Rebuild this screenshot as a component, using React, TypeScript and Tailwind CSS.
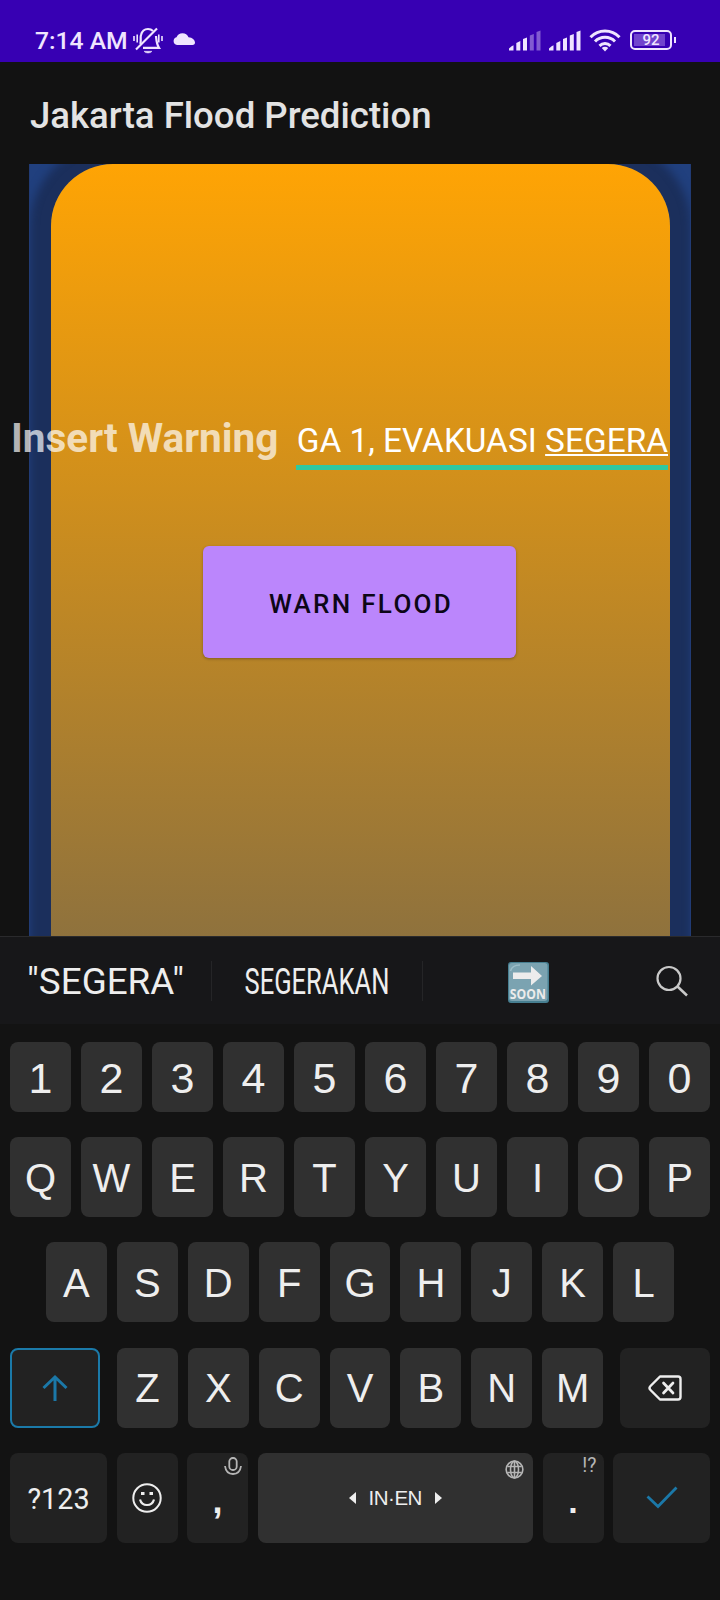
import type { ReactNode } from "react";

const roboto = "font-['Roboto',sans-serif]";
const sans = "font-['Liberation_Sans',sans-serif]";

function StatusBar() {
  return (
    <header className="flex h-[62px] items-start bg-[#3700b3] pl-[35px] text-[#efe4ff]">
      <div className={`${roboto} mt-[26px] w-[94px] whitespace-nowrap text-[24.700px] leading-[29px] font-medium`}>7:14 AM</div>
      <svg className="mt-[26px] ml-[3px]" width="32" height="30" viewBox="0 0 32 30" fill="none" stroke="currentColor" strokeWidth="2">
        <path d="M8.200 18C9.500 15 8 12 9 9C10 5 12.500 3 16 3C18 3 20 4 21 5M24 10C24.500 15 24.500 18 27 21.800H11" strokeWidth="2.200" />
        <path d="M4 23.500L25 2.500" strokeWidth="2.200" />
        <path d="M12 25.300H20Q19 27 16 27T12 25.300" fill="currentColor" strokeWidth=".5" />
        <path d="M2 10V15M5.200 8.500V16.500M26.800 8.500V16.500M30 10V15" strokeWidth="1.600" />
      </svg>
      <svg className="mt-[32px] ml-[9px]" width="23" height="14" viewBox="0 0 23 14" fill="currentColor">
        <path d="M4 13A4 4 0 0 1 3.500 5.200A6.500 6.500 0 0 1 15.500 5.200Q21.500 6 22 10.300Q22 13 19.500 13Z" />
      </svg>
      <div className="mt-[30px] ml-[313px] flex gap-[8px]">
        <Signal dim />
        <Signal />
      </div>
      <svg className="mt-[28px] ml-[8px]" width="32" height="24" viewBox="0 0 32 24" fill="none" stroke="currentColor" strokeWidth="3">
        <path d="M1.500 9.200A20 20 0 0 1 30.500 9.200M6 13.500A14 14 0 0 1 26 13.500M10.500 17.800A8 8 0 0 1 21.500 17.800" />
        <path d="M16 23.500L12.800 20A4.500 4.500 0 0 1 19.200 20Z" fill="currentColor" stroke="none" />
      </svg>
      <div className="mt-[30px] ml-[9px] flex items-center">
        <div className="flex h-[20px] w-[42px] rounded-[5px] border-2 border-[#efe4ff] p-[2px]">
          <div className={`${roboto} flex h-[12px] w-[31px] items-center justify-center bg-[#7143cd] pt-[1px] pl-[3px] text-[15px] leading-none font-medium`}>92</div>
        </div>
        <div className="ml-[2px] h-[6px] w-[2px] bg-[#efe4ff]" />
      </div>
    </header>
  );
}

function Signal({ dim = false }: { dim?: boolean }) {
  return (
    <svg width="32" height="21" viewBox="0 0 32 21" fill="currentColor">
      <path d="M0 20.500V18.500Q3 15.500 4.500 15.200V20.500Z" />
      <path d="M7.300 20.500V13L11.300 11V20.500Z" />
      <path d="M14 20.500V9L18 7.500V20.500Z" />
      <path d="M20.800 20.500V5.500L24.800 4V20.500Z" opacity={dim ? 0.4 : 1} />
      <path d="M27.500 20.500V2L31.500 .500V20.500Z" opacity={dim ? 0.4 : 1} />
    </svg>
  );
}

function Key({ children, className = "bg-[#303030]" }: { children: ReactNode; className?: string }) {
  return <button className={`flex min-w-0 flex-1 items-center justify-center rounded-[8px] ${className}`}>{children}</button>;
}

function Letters({ keys }: { keys: string }) {
  return keys.split("").map((k) => (
    <Key key={k}>
      <span className={`${sans} pt-[1px] text-[40px] leading-none text-[#eeeeee]`}>{k}</span>
    </Key>
  ));
}

function SoonEmoji() {
  return (
    <svg className="w-[41px] overflow-visible" width="41" height="41" viewBox="0 0 41 41">
      <rect width="41" height="41" rx="3" fill="#477f91" />
      <rect x="1" y="1" width="38.500" height="38" rx="3" fill="#7ba3b1" />
      <path d="M2.500 9Q4 3 12 3" stroke="#9bbdc8" strokeWidth="1.500" fill="none" />
      <path d="M5 10.500H23V4L34 14L23 23.500V17H5Z" fill="#ececec" />
      <text x="19.800" y="36.900" textAnchor="middle" textLength="36" lengthAdjust="spacingAndGlyphs" fill="#ececec" fontFamily="Open Sans" fontWeight="700" fontSize="13.500">SOON</text>
    </svg>
  );
}

function Suggestions() {
  return (
    <div className={`${roboto} flex h-[88px] items-center border-t border-[#2a2a2c] bg-[#171719] text-[#eeeeee]`}>
      <div className="flex w-[211px] justify-center pt-[3px] text-[36.800px]">"SEGERA"</div>
      <div className="h-[40px] w-px bg-[#252527]" />
      <div className="flex w-[210px] justify-center pt-[3px] pr-[1px] text-[37px]">
        <span className="scale-x-[0.69]">SEGERAKAN</span>
      </div>
      <div className="h-[40px] w-px bg-[#252527]" />
      <div className="flex w-[211px] justify-center pt-[3px] pr-[1px]"><SoonEmoji /></div>
      <svg className="ml-[21px]" width="34" height="34" viewBox="0 0 34 34" fill="none" stroke="#c9c9c9" strokeWidth="2.200">
        <circle cx="14" cy="14.500" r="11.500" />
        <path d="M22.500 22.500L32 31.500" strokeWidth="2.500" />
      </svg>
    </div>
  );
}

function Keyboard() {
  return (
    <section className="flex h-[664px] flex-col bg-[#131313]">
      <Suggestions />
      <div className="flex flex-col gap-[25px] pt-[18px]">
        <div className="flex h-[70px] gap-[10px] px-[10px]">
          {"1234567890".split("").map((k) => (
            <Key key={k}>
              <span className={`${sans} pt-[2px] text-[43px] leading-none text-[#eeeeee]`}>{k}</span>
            </Key>
          ))}
        </div>
        <div className="flex h-[80px] gap-[10px] px-[10px]"><Letters keys="QWERTYUIOP" /></div>
        <div className="flex h-[80px] gap-[10px] px-[46px]"><Letters keys="ASDFGHJKL" /></div>
        <div className="mt-[0.500px] flex h-[80px] justify-between px-[10px]">
          <Key className="max-w-[90px] border-2 border-[#1b7aa9] bg-[#222222]">
            <svg width="26" height="28" viewBox="0 0 26 28" fill="none" stroke="#1b78a8" strokeWidth="3">
              <path d="M13 27V3M1.500 14L13 3L24.500 14" />
            </svg>
          </Key>
          <div className="flex w-[486px] gap-[10px]"><Letters keys="ZXCVBNM" /></div>
          <Key className="max-w-[90px] bg-[#222222]">
            <svg width="34" height="26" viewBox="0 0 34 26" fill="none" stroke="#eeeeee" strokeWidth="2.400" strokeLinejoin="round" strokeLinecap="round">
              <path d="M12 1.500H30Q32.500 1.500 32.500 4V22Q32.500 24.500 30 24.500H12L2.500 15Q.5 13 2.500 11Z" />
              <path d="M15.500 8L25 18M25 8L15.500 18" strokeWidth="2.700" />
            </svg>
          </Key>
        </div>
        <div className="flex h-[90px] gap-[9.500px] px-[10px]">
          <Key className="max-w-[97px] bg-[#222222]">
            <span className={`${roboto} pt-[4px] text-[28.800px] text-[#eeeeee]`}>?123</span>
          </Key>
          <Key className="max-w-[61px] bg-[#222222]">
            <svg width="30" height="30" viewBox="0 0 30 30" fill="none" stroke="#eeeeee" strokeWidth="2">
              <circle cx="15" cy="15" r="13.700" />
              <path d="M8 16.500Q9.500 22 15 22T22 16.500" strokeWidth="2.200" />
              <path d="M9 10.500H12.500M17.500 10.500H21" strokeWidth="3.200" />
            </svg>
          </Key>
          <Key className="relative max-w-[61px] bg-[#222222]">
            <span className={`${sans} pt-[7px] text-[36px] leading-none font-bold text-[#eeeeee]`}>,</span>
            <svg className="absolute top-[4px] right-[6px]" width="18" height="19" viewBox="0 0 18 19" fill="none" stroke="#b5b5b5" strokeWidth="1.800">
              <rect x="5.300" y="1" width="7.400" height="12" rx="3.500" />
              <path d="M1 9Q2 17 9 17T17 9" />
            </svg>
          </Key>
          <Key className="relative bg-[#303030]">
            <div className={`${sans} flex items-center gap-[14px] pt-[1px] text-[20.500px] text-[#eeeeee]`}>
              <svg width="7" height="12" viewBox="0 0 7 12" fill="currentColor"><path d="M7 0V12L0 6Z" /></svg>
              <span className="-mx-[1px] tracking-[-0.500px]">IN·EN</span>
              <svg width="7" height="12" viewBox="0 0 7 12" fill="currentColor"><path d="M0 0V12L7 6Z" /></svg>
            </div>
            <svg className="absolute top-[7px] right-[9px]" width="19" height="19" viewBox="0 0 20 20" fill="none" stroke="#b5b5b5" strokeWidth="1.700">
              <circle cx="10" cy="10" r="8.800" />
              <ellipse cx="10" cy="10" rx="4.200" ry="8.800" />
              <path d="M10 1V19M2.500 6.800H17.500M2.500 13.200H17.500" />
            </svg>
          </Key>
          <Key className="relative max-w-[61px] bg-[#222222]">
            <span className={`${sans} pt-[7px] text-[34px] leading-none font-bold text-[#eeeeee]`}>.</span>
            <span className={`${roboto} absolute top-[2px] right-[7px] text-[19.500px] leading-[21px] text-[#b5b5b5]`}>!?</span>
          </Key>
          <Key className="max-w-[97px] bg-[#222222]">
            <svg width="32" height="23" viewBox="0 0 32 23" fill="none" stroke="#1b78a8" strokeWidth="2.800">
              <path d="M1.500 10.500L12 20.500L30.500 1.500" />
            </svg>
          </Key>
        </div>
      </div>
    </section>
  );
}

export default function App() {
  return (
    <div className="flex h-[1600px] w-[720px] flex-col overflow-hidden bg-[#121212]">
      <StatusBar />
      <div className="flex h-[102px] items-center px-[30px]">
        <h1 className={`${roboto} pt-[7px] text-[36.600px] font-medium whitespace-nowrap text-[#e3e3e3]`}>Jakarta Flood Prediction</h1>
      </div>
      <main className="grid h-[772px]">
        <div className="col-start-1 row-start-1 mr-[29px] ml-[29px] flex overflow-hidden border-x border-[#213b74] bg-[#21407e] pr-[20px] pl-[21px]">
          <div className="flex-1 rounded-t-[62px] bg-linear-to-b/srgb from-[#ffa404] to-[#8f723d] shadow-[0_0_8px_21px_#1b2f5c]" />
        </div>
        <div className={`${roboto} z-10 col-start-1 row-start-1 flex flex-col items-center pt-[250px]`}>
          <div className="flex h-[54px] w-full items-baseline pl-[11px]">
            <label className="w-[286px] text-[40.500px] leading-[48px] font-bold whitespace-nowrap text-white/70">Insert Warning</label>
            <div className="-ml-[1px] flex h-[53px] w-[372px] justify-end border-b-[5px] border-[#2fc8a0] text-[33.400px] leading-[48px] whitespace-pre text-white">
              <span>GA 1, EVAKUASI </span>
              <span className="underline decoration-[1.500px] underline-offset-[2px]">SEGERA</span>
            </div>
          </div>
          <button className="mt-[78px] mr-[1px] h-[112px] w-[313px] rounded-[6px] bg-[#bb86fc] pt-[4px] pl-[3px] text-[26px] font-medium tracking-[2.300px] text-[#0d0617] shadow-[0_1px_3px_rgba(0,0,0,0.3)]">WARN FLOOD</button>
        </div>
      </main>
      <Keyboard />
    </div>
  );
}
